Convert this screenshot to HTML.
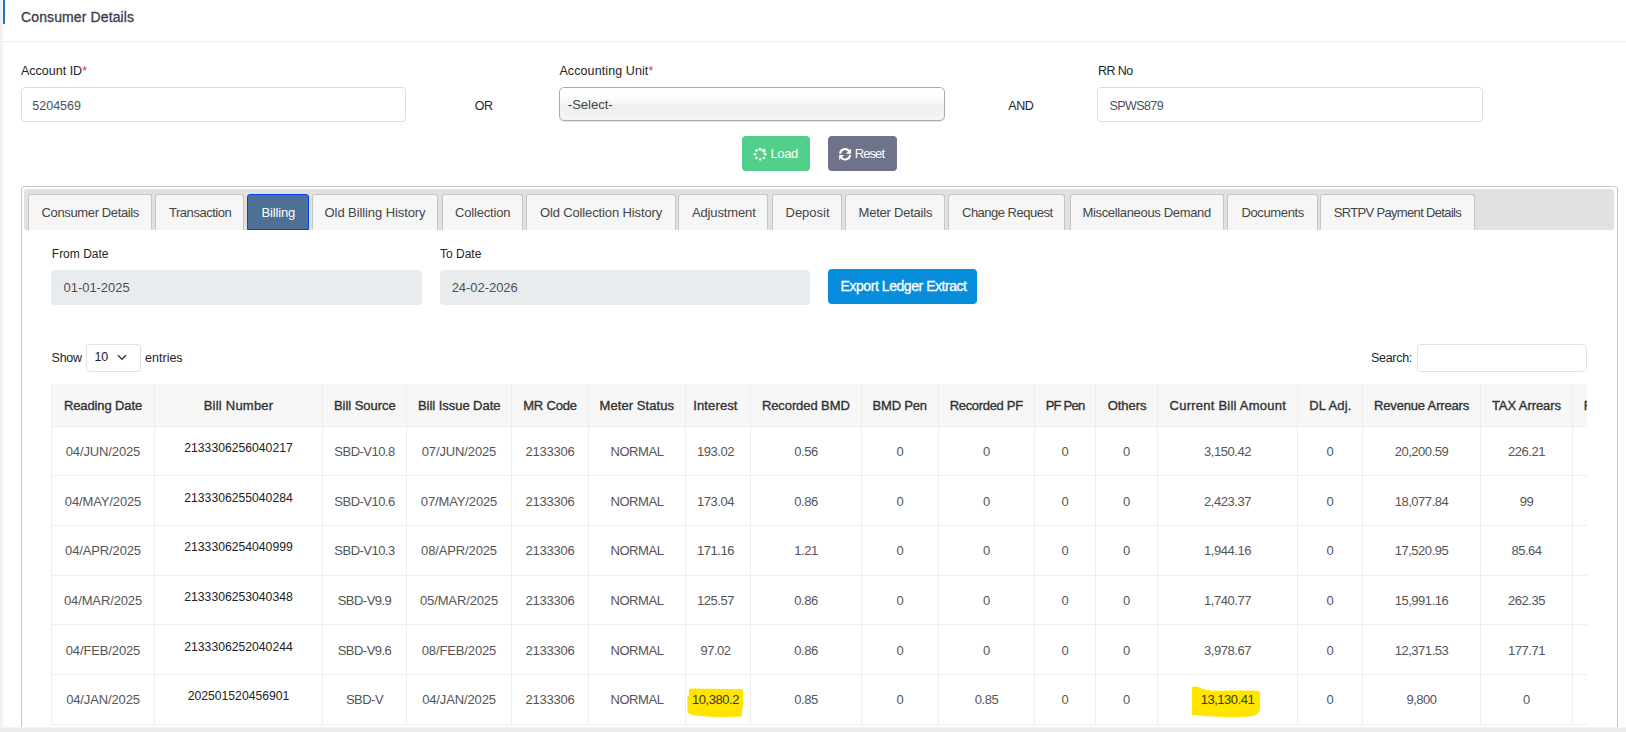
<!DOCTYPE html>
<html><head><meta charset="utf-8"><title>Consumer Details</title>
<style>
html,body{margin:0;padding:0;}
body{width:1626px;height:732px;overflow:hidden;position:relative;background:#fff;font-family:"Liberation Sans", sans-serif;}
body div{position:absolute;}
.t{font-family:"Liberation Sans", sans-serif;}
</style></head><body>
<div style="left:0px;top:0px;width:3px;height:732px;background:#f1f2f5;"></div><div style="left:3px;top:0px;width:2px;height:24px;background:#1c79c0;"></div><div class="t" style="left:21px;top:17.25px;font-size:14px;color:#3b4050;font-weight:normal;line-height:0;white-space:nowrap;letter-spacing:0.12px;-webkit-text-stroke:0.32px #3b4050;">Consumer Details</div><div style="left:3px;top:41px;width:1623px;height:1px;background:#eceef1;"></div><div class="t" style="left:21px;top:71.25px;font-size:12.5px;color:#212529;font-weight:normal;line-height:0;white-space:nowrap;">Account ID<span style="color:#e3342f">*</span></div><div style="left:21px;top:87px;width:385px;height:35px;border:1px solid #dadde2;border-radius:4px;box-sizing:border-box;background:#fff;"></div><div class="t" style="left:32.3px;top:106.25px;font-size:12.5px;color:#495057;font-weight:normal;line-height:0;white-space:nowrap;">5204569</div><div class="t" style="left:474.8px;top:106.25px;font-size:12.5px;color:#212529;font-weight:normal;line-height:0;white-space:nowrap;letter-spacing:-0.5px;">OR</div><div class="t" style="left:559.4px;top:70.95px;font-size:12.5px;color:#212529;font-weight:normal;line-height:0;white-space:nowrap;letter-spacing:0.1px;">Accounting Unit<span style="color:#e3342f">*</span></div><div style="left:559px;top:87px;width:386px;height:34px;border:1px solid #aaa;border-radius:5px;box-sizing:border-box;background:linear-gradient(#fff 20%,#f6f6f6 50%,#eee 52%,#f4f4f4 100%);box-shadow:0 1px 1px rgba(0,0,0,.1);"></div><div class="t" style="left:567.8px;top:104.55px;font-size:13px;color:#444;font-weight:normal;line-height:0;white-space:nowrap;">-Select-</div><div class="t" style="left:1008.3px;top:106.25px;font-size:12.5px;color:#212529;font-weight:normal;line-height:0;white-space:nowrap;letter-spacing:-0.4px;">AND</div><div class="t" style="left:1098px;top:71.25px;font-size:12.5px;color:#212529;font-weight:normal;line-height:0;white-space:nowrap;letter-spacing:-0.6px;">RR No</div><div style="left:1097px;top:87px;width:386px;height:35px;border:1px solid #dadde2;border-radius:4px;box-sizing:border-box;background:#fff;"></div><div class="t" style="left:1109.6px;top:106.25px;font-size:12.5px;color:#495057;font-weight:normal;line-height:0;white-space:nowrap;letter-spacing:-0.6px;">SPWS879</div><div style="left:742px;top:136px;width:68px;height:35px;background:#52d08b;border-radius:4px;"></div><div style="left:828px;top:136px;width:69px;height:35px;background:#6e7389;border-radius:4px;"></div><svg style="position:absolute;left:748px;top:144px" width="24" height="20" viewBox="0 0 24 20"><circle cx="12.0" cy="5.2" r="1.45" fill="#fff"/><circle cx="15.8" cy="6.7" r="1.9" fill="#fff"/><circle cx="17.2" cy="10.2" r="1.3" fill="#fff"/><circle cx="15.8" cy="13.9" r="1.25" fill="#fff"/><circle cx="12.2" cy="15.4" r="1.2" fill="#fff"/><circle cx="8.5" cy="13.9" r="1.25" fill="#fff"/><circle cx="7.0" cy="10.2" r="1.3" fill="#fff"/><circle cx="8.5" cy="6.6" r="1.45" fill="#fff"/></svg><div class="t" style="left:770.5px;top:154.05px;font-size:13px;color:#fff;font-weight:normal;line-height:0;white-space:nowrap;letter-spacing:-0.4px;">Load</div><svg style="position:absolute;left:834px;top:144px" width="24" height="20" viewBox="0 0 24 20"><path d="M6.1 9.8A5 5 0 0 1 15.0 7.0" stroke="#fff" stroke-width="2.1" fill="none"/><path d="M17.1 4.6V9.8H11.9Z" fill="#fff"/><path d="M16.1 10.9A5 5 0 0 1 7.2 13.6" stroke="#fff" stroke-width="2.1" fill="none"/><path d="M5.1 15.9V10.9H10.1Z" fill="#fff"/></svg><div class="t" style="left:854.7px;top:154.05px;font-size:13px;color:#fff;font-weight:normal;line-height:0;white-space:nowrap;letter-spacing:-0.9px;">Reset</div><div style="left:21px;top:186px;width:1597px;height:600px;border:1px solid #c8c8c8;border-radius:3px;box-sizing:border-box;background:#fff;"></div><div style="left:24px;top:189px;width:1590px;height:41px;background:#e3e0e0;border-radius:3px;"></div><div style="left:28px;top:194px;width:124px;height:36px;background:#f6f6f6;border:1px solid #c5c5c5;border-bottom:0;border-radius:3px 3px 0 0;box-sizing:border-box;"></div><div class="t" style="left:41.6px;top:213.05px;font-size:13px;color:#454545;font-weight:normal;line-height:0;white-space:nowrap;letter-spacing:-0.371px;">Consumer Details</div><div style="left:155px;top:194px;width:89px;height:36px;background:#f6f6f6;border:1px solid #c5c5c5;border-bottom:0;border-radius:3px 3px 0 0;box-sizing:border-box;"></div><div class="t" style="left:169px;top:213.05px;font-size:13px;color:#454545;font-weight:normal;line-height:0;white-space:nowrap;letter-spacing:-0.467px;">Transaction</div><div style="left:247px;top:194px;width:62px;height:36px;background:#4d7094;border:1px solid #003eff;border-radius:3px 3px 0 0;box-sizing:border-box;"></div><div class="t" style="left:261.5px;top:213.05px;font-size:13px;color:#fff;font-weight:normal;line-height:0;white-space:nowrap;letter-spacing:-0.155px;">Billing</div><div style="left:312px;top:194px;width:126px;height:36px;background:#f6f6f6;border:1px solid #c5c5c5;border-bottom:0;border-radius:3px 3px 0 0;box-sizing:border-box;"></div><div class="t" style="left:324.6px;top:213.05px;font-size:13px;color:#454545;font-weight:normal;line-height:0;white-space:nowrap;letter-spacing:-0.089px;">Old Billing History</div><div style="left:442px;top:194px;width:81px;height:36px;background:#f6f6f6;border:1px solid #c5c5c5;border-bottom:0;border-radius:3px 3px 0 0;box-sizing:border-box;"></div><div class="t" style="left:455px;top:213.05px;font-size:13px;color:#454545;font-weight:normal;line-height:0;white-space:nowrap;letter-spacing:-0.179px;">Collection</div><div style="left:526px;top:194px;width:150px;height:36px;background:#f6f6f6;border:1px solid #c5c5c5;border-bottom:0;border-radius:3px 3px 0 0;box-sizing:border-box;"></div><div class="t" style="left:539.9px;top:213.05px;font-size:13px;color:#454545;font-weight:normal;line-height:0;white-space:nowrap;letter-spacing:-0.127px;">Old Collection History</div><div style="left:678px;top:194px;width:90px;height:36px;background:#f6f6f6;border:1px solid #c5c5c5;border-bottom:0;border-radius:3px 3px 0 0;box-sizing:border-box;"></div><div class="t" style="left:691.9px;top:213.05px;font-size:13px;color:#454545;font-weight:normal;line-height:0;white-space:nowrap;letter-spacing:-0.125px;">Adjustment</div><div style="left:772px;top:194px;width:70px;height:36px;background:#f6f6f6;border:1px solid #c5c5c5;border-bottom:0;border-radius:3px 3px 0 0;box-sizing:border-box;"></div><div class="t" style="left:785.5px;top:213.05px;font-size:13px;color:#454545;font-weight:normal;line-height:0;white-space:nowrap;letter-spacing:__LS__Depositpx;">Deposit</div><div style="left:845px;top:194px;width:100px;height:36px;background:#f6f6f6;border:1px solid #c5c5c5;border-bottom:0;border-radius:3px 3px 0 0;box-sizing:border-box;"></div><div class="t" style="left:858.6px;top:213.05px;font-size:13px;color:#454545;font-weight:normal;line-height:0;white-space:nowrap;letter-spacing:-0.229px;">Meter Details</div><div style="left:948px;top:194px;width:117px;height:36px;background:#f6f6f6;border:1px solid #c5c5c5;border-bottom:0;border-radius:3px 3px 0 0;box-sizing:border-box;"></div><div class="t" style="left:962px;top:213.05px;font-size:13px;color:#454545;font-weight:normal;line-height:0;white-space:nowrap;letter-spacing:-0.506px;">Change Request</div><div style="left:1070px;top:194px;width:154px;height:36px;background:#f6f6f6;border:1px solid #c5c5c5;border-bottom:0;border-radius:3px 3px 0 0;box-sizing:border-box;"></div><div class="t" style="left:1082.5px;top:213.05px;font-size:13px;color:#454545;font-weight:normal;line-height:0;white-space:nowrap;letter-spacing:-0.341px;">Miscellaneous Demand</div><div style="left:1227px;top:194px;width:91px;height:36px;background:#f6f6f6;border:1px solid #c5c5c5;border-bottom:0;border-radius:3px 3px 0 0;box-sizing:border-box;"></div><div class="t" style="left:1241.4px;top:213.05px;font-size:13px;color:#454545;font-weight:normal;line-height:0;white-space:nowrap;letter-spacing:-0.361px;">Documents</div><div style="left:1320px;top:194px;width:155px;height:36px;background:#f6f6f6;border:1px solid #c5c5c5;border-bottom:0;border-radius:3px 3px 0 0;box-sizing:border-box;"></div><div class="t" style="left:1333.7px;top:213.05px;font-size:13px;color:#454545;font-weight:normal;line-height:0;white-space:nowrap;letter-spacing:-0.661px;">SRTPV Payment Details</div><div class="t" style="left:51.8px;top:254.25px;font-size:12px;color:#212529;font-weight:normal;line-height:0;white-space:nowrap;">From Date</div><div style="left:51px;top:270px;width:371px;height:35px;background:#e9ecef;border-radius:4px;"></div><div class="t" style="left:63.6px;top:287.55px;font-size:13px;color:#495057;font-weight:normal;line-height:0;white-space:nowrap;letter-spacing:-0.05px;">01-01-2025</div><div class="t" style="left:440px;top:254.25px;font-size:12px;color:#212529;font-weight:normal;line-height:0;white-space:nowrap;">To Date</div><div style="left:440px;top:270px;width:370px;height:35px;background:#e9ecef;border-radius:4px;"></div><div class="t" style="left:451.7px;top:287.55px;font-size:13px;color:#495057;font-weight:normal;line-height:0;white-space:nowrap;letter-spacing:-0.05px;">24-02-2026</div><div style="left:828px;top:269px;width:149px;height:35px;background:#078ddc;border-radius:4px;"></div><div class="t" style="left:840.6px;top:286.25px;font-size:14px;color:#fff;font-weight:normal;line-height:0;white-space:nowrap;letter-spacing:-0.45px;-webkit-text-stroke:0.3px #fff;">Export Ledger Extract</div><div class="t" style="left:51.6px;top:358.25px;font-size:12.5px;color:#212529;font-weight:normal;line-height:0;white-space:nowrap;letter-spacing:-0.3px;">Show</div><div style="left:85.5px;top:344px;width:55px;height:27.5px;border:1px solid #dee2e6;border-radius:3px;box-sizing:border-box;background:#fff;"></div><div class="t" style="left:94.4px;top:357.05px;font-size:12.5px;color:#212529;font-weight:normal;line-height:0;white-space:nowrap;">10</div><svg style="position:absolute;left:117px;top:354px" width="10" height="7" viewBox="0 0 10 7"><path d="M1 1.2L5 5.2L9 1.2" stroke="#343a40" stroke-width="1.5" fill="none"/></svg><div class="t" style="left:145.1px;top:358.25px;font-size:12.5px;color:#212529;font-weight:normal;line-height:0;white-space:nowrap;">entries</div><div class="t" style="left:1371px;top:358.25px;font-size:12.5px;color:#212529;font-weight:normal;line-height:0;white-space:nowrap;letter-spacing:-0.3px;">Search:</div><div style="left:1417px;top:344px;width:170px;height:28px;border:1px solid #dee2e6;border-radius:4px;box-sizing:border-box;background:#fff;"></div><div style="left:51px;top:384px;width:1536px;height:360px;overflow:hidden;"><div style="left:0px;top:0px;width:1700px;height:42px;background:#f7f7f7;"></div><div style="left:0px;top:42px;width:1700px;height:1px;background:#eceef0;"></div><div style="left:0px;top:91px;width:1700px;height:1px;background:#eceef0;"></div><div style="left:0px;top:141px;width:1700px;height:1px;background:#eceef0;"></div><div style="left:0px;top:191px;width:1700px;height:1px;background:#eceef0;"></div><div style="left:0px;top:240px;width:1700px;height:1px;background:#eceef0;"></div><div style="left:0px;top:290px;width:1700px;height:1px;background:#eceef0;"></div><div style="left:0px;top:340px;width:1700px;height:1px;background:#eceef0;"></div><div style="left:0px;top:0px;width:1px;height:340px;background:#eceef0;"></div><div style="left:103px;top:0px;width:1px;height:340px;background:#eceef0;"></div><div style="left:271px;top:0px;width:1px;height:340px;background:#eceef0;"></div><div style="left:355px;top:0px;width:1px;height:340px;background:#eceef0;"></div><div style="left:460px;top:0px;width:1px;height:340px;background:#eceef0;"></div><div style="left:537px;top:0px;width:1px;height:340px;background:#eceef0;"></div><div style="left:634px;top:0px;width:1px;height:340px;background:#eceef0;"></div><div style="left:699px;top:0px;width:1px;height:340px;background:#eceef0;"></div><div style="left:810px;top:0px;width:1px;height:340px;background:#eceef0;"></div><div style="left:887px;top:0px;width:1px;height:340px;background:#eceef0;"></div><div style="left:983px;top:0px;width:1px;height:340px;background:#eceef0;"></div><div style="left:1044px;top:0px;width:1px;height:340px;background:#eceef0;"></div><div style="left:1106px;top:0px;width:1px;height:340px;background:#eceef0;"></div><div style="left:1246px;top:0px;width:1px;height:340px;background:#eceef0;"></div><div style="left:1311px;top:0px;width:1px;height:340px;background:#eceef0;"></div><div style="left:1429px;top:0px;width:1px;height:340px;background:#eceef0;"></div><div style="left:1521px;top:0px;width:1px;height:340px;background:#eceef0;"></div><div style="left:1629px;top:0px;width:1px;height:340px;background:#eceef0;"></div><svg style="left:636px;top:304px;position:absolute" width="57" height="30" viewBox="0 0 57 30"><path d="M2 1.5 L3.5 0.6 L56 1.2 L56 20.5 L55 21 L55 28.5 L33 29.2 L20 28.5 L6 27.5 L0.5 24.5 L0.3 8 L2 7.5 Z" fill="#ffe500"/></svg><svg style="left:1141px;top:302px;position:absolute" width="69" height="32" viewBox="0 0 69 32"><path d="M0 1 L5 0.6 L9 2.2 Q14 4.2 22 4.8 L62 4.6 Q67.5 4.6 68 7.5 L68 24 Q66 29.5 58 30.5 L40 31.2 L20 30.4 L0 29 Z" fill="#ffe500"/></svg><div class="t" style="left:13px;top:22.05px;font-size:13px;color:#333;font-weight:normal;line-height:0;white-space:nowrap;letter-spacing:-0.125px;-webkit-text-stroke:0.35px #333;">Reading Date</div><div class="t" style="left:152.7px;top:22.05px;font-size:13px;color:#333;font-weight:normal;line-height:0;white-space:nowrap;letter-spacing:0.228px;-webkit-text-stroke:0.35px #333;">Bill Number</div><div class="t" style="left:283px;top:22.05px;font-size:13px;color:#333;font-weight:normal;line-height:0;white-space:nowrap;letter-spacing:-0.049px;-webkit-text-stroke:0.35px #333;">Bill Source</div><div class="t" style="left:367px;top:22.05px;font-size:13px;color:#333;font-weight:normal;line-height:0;white-space:nowrap;letter-spacing:-0.046px;-webkit-text-stroke:0.35px #333;">Bill Issue Date</div><div class="t" style="left:472.20000000000005px;top:22.05px;font-size:13px;color:#333;font-weight:normal;line-height:0;white-space:nowrap;letter-spacing:-0.189px;-webkit-text-stroke:0.35px #333;">MR Code</div><div class="t" style="left:548.6px;top:22.05px;font-size:13px;color:#333;font-weight:normal;line-height:0;white-space:nowrap;letter-spacing:0.066px;-webkit-text-stroke:0.35px #333;">Meter Status</div><div class="t" style="left:642.3px;top:22.05px;font-size:13px;color:#333;font-weight:normal;line-height:0;white-space:nowrap;letter-spacing:0.118px;-webkit-text-stroke:0.35px #333;">Interest</div><div class="t" style="left:710.9px;top:22.05px;font-size:13px;color:#333;font-weight:normal;line-height:0;white-space:nowrap;letter-spacing:-0.090px;-webkit-text-stroke:0.35px #333;">Recorded BMD</div><div class="t" style="left:821.6px;top:22.05px;font-size:13px;color:#333;font-weight:normal;line-height:0;white-space:nowrap;letter-spacing:-0.192px;-webkit-text-stroke:0.35px #333;">BMD Pen</div><div class="t" style="left:898.7px;top:22.05px;font-size:13px;color:#333;font-weight:normal;line-height:0;white-space:nowrap;letter-spacing:-0.318px;-webkit-text-stroke:0.35px #333;">Recorded PF</div><div class="t" style="left:994.7px;top:22.05px;font-size:13px;color:#333;font-weight:normal;line-height:0;white-space:nowrap;letter-spacing:-0.777px;-webkit-text-stroke:0.35px #333;">PF Pen</div><div class="t" style="left:1056.7px;top:22.05px;font-size:13px;color:#333;font-weight:normal;line-height:0;white-space:nowrap;letter-spacing:-0.053px;-webkit-text-stroke:0.35px #333;">Others</div><div class="t" style="left:1118.6px;top:22.05px;font-size:13px;color:#333;font-weight:normal;line-height:0;white-space:nowrap;letter-spacing:0.237px;-webkit-text-stroke:0.35px #333;">Current Bill Amount</div><div class="t" style="left:1258.2px;top:22.05px;font-size:13px;color:#333;font-weight:normal;line-height:0;white-space:nowrap;letter-spacing:0.109px;-webkit-text-stroke:0.35px #333;">DL Adj.</div><div class="t" style="left:1323px;top:22.05px;font-size:13px;color:#333;font-weight:normal;line-height:0;white-space:nowrap;letter-spacing:-0.164px;-webkit-text-stroke:0.35px #333;">Revenue Arrears</div><div class="t" style="left:1440.9px;top:22.05px;font-size:13px;color:#333;font-weight:normal;line-height:0;white-space:nowrap;letter-spacing:-0.068px;-webkit-text-stroke:0.35px #333;">TAX Arrears</div><div class="t" style="left:1532.8px;top:22.05px;font-size:13px;color:#333;font-weight:normal;line-height:0;white-space:nowrap;letter-spacing:-0.4px;-webkit-text-stroke:0.35px #333;">Record</div><div class="t" style="left:0px;top:67.75px;font-size:13px;color:#555;font-weight:normal;line-height:0;white-space:nowrap;letter-spacing:-0.13px;width:103px;text-align:center;box-sizing:border-box;padding-left:1px;">04/JUN/2025</div><div class="t" style="left:103px;top:64.05px;font-size:12.2px;color:#212121;font-weight:normal;line-height:0;white-space:nowrap;width:168px;text-align:center;padding-left:1px;box-sizing:border-box;">2133306256040217</div><div class="t" style="left:271px;top:67.75px;font-size:13px;color:#555;font-weight:normal;line-height:0;white-space:nowrap;letter-spacing:-0.53px;width:84px;text-align:center;box-sizing:border-box;padding-left:1px;">SBD-V10.8</div><div class="t" style="left:355px;top:67.75px;font-size:13px;color:#555;font-weight:normal;line-height:0;white-space:nowrap;letter-spacing:-0.13px;width:105px;text-align:center;box-sizing:border-box;padding-left:1px;">07/JUN/2025</div><div class="t" style="left:460px;top:67.75px;font-size:13px;color:#555;font-weight:normal;line-height:0;white-space:nowrap;letter-spacing:-0.21px;width:77px;text-align:center;box-sizing:border-box;padding-left:1px;">2133306</div><div class="t" style="left:537px;top:67.75px;font-size:13px;color:#555;font-weight:normal;line-height:0;white-space:nowrap;letter-spacing:-0.42px;width:97px;text-align:center;box-sizing:border-box;padding-left:1px;">NORMAL</div><div class="t" style="left:631.5px;top:67.75px;font-size:13px;color:#555;font-weight:normal;line-height:0;white-space:nowrap;letter-spacing:-0.47px;width:65px;text-align:center;box-sizing:border-box;padding-left:1px;">193.02</div><div class="t" style="left:699px;top:67.75px;font-size:13px;color:#555;font-weight:normal;line-height:0;white-space:nowrap;letter-spacing:-0.47px;width:111px;text-align:center;box-sizing:border-box;padding-left:1px;">0.56</div><div class="t" style="left:810px;top:67.75px;font-size:13px;color:#555;font-weight:normal;line-height:0;white-space:nowrap;letter-spacing:-0.47px;width:77px;text-align:center;box-sizing:border-box;padding-left:1px;">0</div><div class="t" style="left:887px;top:67.75px;font-size:13px;color:#555;font-weight:normal;line-height:0;white-space:nowrap;letter-spacing:-0.47px;width:96px;text-align:center;box-sizing:border-box;padding-left:1px;">0</div><div class="t" style="left:983px;top:67.75px;font-size:13px;color:#555;font-weight:normal;line-height:0;white-space:nowrap;letter-spacing:-0.47px;width:61px;text-align:center;box-sizing:border-box;padding-left:1px;">0</div><div class="t" style="left:1044px;top:67.75px;font-size:13px;color:#555;font-weight:normal;line-height:0;white-space:nowrap;letter-spacing:-0.47px;width:62px;text-align:center;box-sizing:border-box;padding-left:1px;">0</div><div class="t" style="left:1106px;top:67.75px;font-size:13px;color:#555;font-weight:normal;line-height:0;white-space:nowrap;letter-spacing:-0.47px;width:140px;text-align:center;box-sizing:border-box;padding-left:1px;">3,150.42</div><div class="t" style="left:1246px;top:67.75px;font-size:13px;color:#555;font-weight:normal;line-height:0;white-space:nowrap;letter-spacing:-0.47px;width:65px;text-align:center;box-sizing:border-box;padding-left:1px;">0</div><div class="t" style="left:1311px;top:67.75px;font-size:13px;color:#555;font-weight:normal;line-height:0;white-space:nowrap;letter-spacing:-0.47px;width:118px;text-align:center;box-sizing:border-box;padding-left:1px;">20,200.59</div><div class="t" style="left:1429px;top:67.75px;font-size:13px;color:#555;font-weight:normal;line-height:0;white-space:nowrap;letter-spacing:-0.47px;width:92px;text-align:center;box-sizing:border-box;padding-left:1px;">226.21</div><div class="t" style="left:0px;top:117.75px;font-size:13px;color:#555;font-weight:normal;line-height:0;white-space:nowrap;letter-spacing:-0.13px;width:103px;text-align:center;box-sizing:border-box;padding-left:1px;">04/MAY/2025</div><div class="t" style="left:103px;top:114.05px;font-size:12.2px;color:#212121;font-weight:normal;line-height:0;white-space:nowrap;width:168px;text-align:center;padding-left:1px;box-sizing:border-box;">2133306255040284</div><div class="t" style="left:271px;top:117.75px;font-size:13px;color:#555;font-weight:normal;line-height:0;white-space:nowrap;letter-spacing:-0.53px;width:84px;text-align:center;box-sizing:border-box;padding-left:1px;">SBD-V10.6</div><div class="t" style="left:355px;top:117.75px;font-size:13px;color:#555;font-weight:normal;line-height:0;white-space:nowrap;letter-spacing:-0.13px;width:105px;text-align:center;box-sizing:border-box;padding-left:1px;">07/MAY/2025</div><div class="t" style="left:460px;top:117.75px;font-size:13px;color:#555;font-weight:normal;line-height:0;white-space:nowrap;letter-spacing:-0.21px;width:77px;text-align:center;box-sizing:border-box;padding-left:1px;">2133306</div><div class="t" style="left:537px;top:117.75px;font-size:13px;color:#555;font-weight:normal;line-height:0;white-space:nowrap;letter-spacing:-0.42px;width:97px;text-align:center;box-sizing:border-box;padding-left:1px;">NORMAL</div><div class="t" style="left:631.5px;top:117.75px;font-size:13px;color:#555;font-weight:normal;line-height:0;white-space:nowrap;letter-spacing:-0.47px;width:65px;text-align:center;box-sizing:border-box;padding-left:1px;">173.04</div><div class="t" style="left:699px;top:117.75px;font-size:13px;color:#555;font-weight:normal;line-height:0;white-space:nowrap;letter-spacing:-0.47px;width:111px;text-align:center;box-sizing:border-box;padding-left:1px;">0.86</div><div class="t" style="left:810px;top:117.75px;font-size:13px;color:#555;font-weight:normal;line-height:0;white-space:nowrap;letter-spacing:-0.47px;width:77px;text-align:center;box-sizing:border-box;padding-left:1px;">0</div><div class="t" style="left:887px;top:117.75px;font-size:13px;color:#555;font-weight:normal;line-height:0;white-space:nowrap;letter-spacing:-0.47px;width:96px;text-align:center;box-sizing:border-box;padding-left:1px;">0</div><div class="t" style="left:983px;top:117.75px;font-size:13px;color:#555;font-weight:normal;line-height:0;white-space:nowrap;letter-spacing:-0.47px;width:61px;text-align:center;box-sizing:border-box;padding-left:1px;">0</div><div class="t" style="left:1044px;top:117.75px;font-size:13px;color:#555;font-weight:normal;line-height:0;white-space:nowrap;letter-spacing:-0.47px;width:62px;text-align:center;box-sizing:border-box;padding-left:1px;">0</div><div class="t" style="left:1106px;top:117.75px;font-size:13px;color:#555;font-weight:normal;line-height:0;white-space:nowrap;letter-spacing:-0.47px;width:140px;text-align:center;box-sizing:border-box;padding-left:1px;">2,423.37</div><div class="t" style="left:1246px;top:117.75px;font-size:13px;color:#555;font-weight:normal;line-height:0;white-space:nowrap;letter-spacing:-0.47px;width:65px;text-align:center;box-sizing:border-box;padding-left:1px;">0</div><div class="t" style="left:1311px;top:117.75px;font-size:13px;color:#555;font-weight:normal;line-height:0;white-space:nowrap;letter-spacing:-0.47px;width:118px;text-align:center;box-sizing:border-box;padding-left:1px;">18,077.84</div><div class="t" style="left:1429px;top:117.75px;font-size:13px;color:#555;font-weight:normal;line-height:0;white-space:nowrap;letter-spacing:-0.47px;width:92px;text-align:center;box-sizing:border-box;padding-left:1px;">99</div><div class="t" style="left:0px;top:166.75px;font-size:13px;color:#555;font-weight:normal;line-height:0;white-space:nowrap;letter-spacing:-0.13px;width:103px;text-align:center;box-sizing:border-box;padding-left:1px;">04/APR/2025</div><div class="t" style="left:103px;top:163.05px;font-size:12.2px;color:#212121;font-weight:normal;line-height:0;white-space:nowrap;width:168px;text-align:center;padding-left:1px;box-sizing:border-box;">2133306254040999</div><div class="t" style="left:271px;top:166.75px;font-size:13px;color:#555;font-weight:normal;line-height:0;white-space:nowrap;letter-spacing:-0.53px;width:84px;text-align:center;box-sizing:border-box;padding-left:1px;">SBD-V10.3</div><div class="t" style="left:355px;top:166.75px;font-size:13px;color:#555;font-weight:normal;line-height:0;white-space:nowrap;letter-spacing:-0.13px;width:105px;text-align:center;box-sizing:border-box;padding-left:1px;">08/APR/2025</div><div class="t" style="left:460px;top:166.75px;font-size:13px;color:#555;font-weight:normal;line-height:0;white-space:nowrap;letter-spacing:-0.21px;width:77px;text-align:center;box-sizing:border-box;padding-left:1px;">2133306</div><div class="t" style="left:537px;top:166.75px;font-size:13px;color:#555;font-weight:normal;line-height:0;white-space:nowrap;letter-spacing:-0.42px;width:97px;text-align:center;box-sizing:border-box;padding-left:1px;">NORMAL</div><div class="t" style="left:631.5px;top:166.75px;font-size:13px;color:#555;font-weight:normal;line-height:0;white-space:nowrap;letter-spacing:-0.47px;width:65px;text-align:center;box-sizing:border-box;padding-left:1px;">171.16</div><div class="t" style="left:699px;top:166.75px;font-size:13px;color:#555;font-weight:normal;line-height:0;white-space:nowrap;letter-spacing:-0.47px;width:111px;text-align:center;box-sizing:border-box;padding-left:1px;">1.21</div><div class="t" style="left:810px;top:166.75px;font-size:13px;color:#555;font-weight:normal;line-height:0;white-space:nowrap;letter-spacing:-0.47px;width:77px;text-align:center;box-sizing:border-box;padding-left:1px;">0</div><div class="t" style="left:887px;top:166.75px;font-size:13px;color:#555;font-weight:normal;line-height:0;white-space:nowrap;letter-spacing:-0.47px;width:96px;text-align:center;box-sizing:border-box;padding-left:1px;">0</div><div class="t" style="left:983px;top:166.75px;font-size:13px;color:#555;font-weight:normal;line-height:0;white-space:nowrap;letter-spacing:-0.47px;width:61px;text-align:center;box-sizing:border-box;padding-left:1px;">0</div><div class="t" style="left:1044px;top:166.75px;font-size:13px;color:#555;font-weight:normal;line-height:0;white-space:nowrap;letter-spacing:-0.47px;width:62px;text-align:center;box-sizing:border-box;padding-left:1px;">0</div><div class="t" style="left:1106px;top:166.75px;font-size:13px;color:#555;font-weight:normal;line-height:0;white-space:nowrap;letter-spacing:-0.47px;width:140px;text-align:center;box-sizing:border-box;padding-left:1px;">1,944.16</div><div class="t" style="left:1246px;top:166.75px;font-size:13px;color:#555;font-weight:normal;line-height:0;white-space:nowrap;letter-spacing:-0.47px;width:65px;text-align:center;box-sizing:border-box;padding-left:1px;">0</div><div class="t" style="left:1311px;top:166.75px;font-size:13px;color:#555;font-weight:normal;line-height:0;white-space:nowrap;letter-spacing:-0.47px;width:118px;text-align:center;box-sizing:border-box;padding-left:1px;">17,520.95</div><div class="t" style="left:1429px;top:166.75px;font-size:13px;color:#555;font-weight:normal;line-height:0;white-space:nowrap;letter-spacing:-0.47px;width:92px;text-align:center;box-sizing:border-box;padding-left:1px;">85.64</div><div class="t" style="left:0px;top:216.75px;font-size:13px;color:#555;font-weight:normal;line-height:0;white-space:nowrap;letter-spacing:-0.13px;width:103px;text-align:center;box-sizing:border-box;padding-left:1px;">04/MAR/2025</div><div class="t" style="left:103px;top:213.05px;font-size:12.2px;color:#212121;font-weight:normal;line-height:0;white-space:nowrap;width:168px;text-align:center;padding-left:1px;box-sizing:border-box;">2133306253040348</div><div class="t" style="left:271px;top:216.75px;font-size:13px;color:#555;font-weight:normal;line-height:0;white-space:nowrap;letter-spacing:-0.53px;width:84px;text-align:center;box-sizing:border-box;padding-left:1px;">SBD-V9.9</div><div class="t" style="left:355px;top:216.75px;font-size:13px;color:#555;font-weight:normal;line-height:0;white-space:nowrap;letter-spacing:-0.13px;width:105px;text-align:center;box-sizing:border-box;padding-left:1px;">05/MAR/2025</div><div class="t" style="left:460px;top:216.75px;font-size:13px;color:#555;font-weight:normal;line-height:0;white-space:nowrap;letter-spacing:-0.21px;width:77px;text-align:center;box-sizing:border-box;padding-left:1px;">2133306</div><div class="t" style="left:537px;top:216.75px;font-size:13px;color:#555;font-weight:normal;line-height:0;white-space:nowrap;letter-spacing:-0.42px;width:97px;text-align:center;box-sizing:border-box;padding-left:1px;">NORMAL</div><div class="t" style="left:631.5px;top:216.75px;font-size:13px;color:#555;font-weight:normal;line-height:0;white-space:nowrap;letter-spacing:-0.47px;width:65px;text-align:center;box-sizing:border-box;padding-left:1px;">125.57</div><div class="t" style="left:699px;top:216.75px;font-size:13px;color:#555;font-weight:normal;line-height:0;white-space:nowrap;letter-spacing:-0.47px;width:111px;text-align:center;box-sizing:border-box;padding-left:1px;">0.86</div><div class="t" style="left:810px;top:216.75px;font-size:13px;color:#555;font-weight:normal;line-height:0;white-space:nowrap;letter-spacing:-0.47px;width:77px;text-align:center;box-sizing:border-box;padding-left:1px;">0</div><div class="t" style="left:887px;top:216.75px;font-size:13px;color:#555;font-weight:normal;line-height:0;white-space:nowrap;letter-spacing:-0.47px;width:96px;text-align:center;box-sizing:border-box;padding-left:1px;">0</div><div class="t" style="left:983px;top:216.75px;font-size:13px;color:#555;font-weight:normal;line-height:0;white-space:nowrap;letter-spacing:-0.47px;width:61px;text-align:center;box-sizing:border-box;padding-left:1px;">0</div><div class="t" style="left:1044px;top:216.75px;font-size:13px;color:#555;font-weight:normal;line-height:0;white-space:nowrap;letter-spacing:-0.47px;width:62px;text-align:center;box-sizing:border-box;padding-left:1px;">0</div><div class="t" style="left:1106px;top:216.75px;font-size:13px;color:#555;font-weight:normal;line-height:0;white-space:nowrap;letter-spacing:-0.47px;width:140px;text-align:center;box-sizing:border-box;padding-left:1px;">1,740.77</div><div class="t" style="left:1246px;top:216.75px;font-size:13px;color:#555;font-weight:normal;line-height:0;white-space:nowrap;letter-spacing:-0.47px;width:65px;text-align:center;box-sizing:border-box;padding-left:1px;">0</div><div class="t" style="left:1311px;top:216.75px;font-size:13px;color:#555;font-weight:normal;line-height:0;white-space:nowrap;letter-spacing:-0.47px;width:118px;text-align:center;box-sizing:border-box;padding-left:1px;">15,991.16</div><div class="t" style="left:1429px;top:216.75px;font-size:13px;color:#555;font-weight:normal;line-height:0;white-space:nowrap;letter-spacing:-0.47px;width:92px;text-align:center;box-sizing:border-box;padding-left:1px;">262.35</div><div class="t" style="left:0px;top:266.75px;font-size:13px;color:#555;font-weight:normal;line-height:0;white-space:nowrap;letter-spacing:-0.13px;width:103px;text-align:center;box-sizing:border-box;padding-left:1px;">04/FEB/2025</div><div class="t" style="left:103px;top:263.05px;font-size:12.2px;color:#212121;font-weight:normal;line-height:0;white-space:nowrap;width:168px;text-align:center;padding-left:1px;box-sizing:border-box;">2133306252040244</div><div class="t" style="left:271px;top:266.75px;font-size:13px;color:#555;font-weight:normal;line-height:0;white-space:nowrap;letter-spacing:-0.53px;width:84px;text-align:center;box-sizing:border-box;padding-left:1px;">SBD-V9.6</div><div class="t" style="left:355px;top:266.75px;font-size:13px;color:#555;font-weight:normal;line-height:0;white-space:nowrap;letter-spacing:-0.13px;width:105px;text-align:center;box-sizing:border-box;padding-left:1px;">08/FEB/2025</div><div class="t" style="left:460px;top:266.75px;font-size:13px;color:#555;font-weight:normal;line-height:0;white-space:nowrap;letter-spacing:-0.21px;width:77px;text-align:center;box-sizing:border-box;padding-left:1px;">2133306</div><div class="t" style="left:537px;top:266.75px;font-size:13px;color:#555;font-weight:normal;line-height:0;white-space:nowrap;letter-spacing:-0.42px;width:97px;text-align:center;box-sizing:border-box;padding-left:1px;">NORMAL</div><div class="t" style="left:631.5px;top:266.75px;font-size:13px;color:#555;font-weight:normal;line-height:0;white-space:nowrap;letter-spacing:-0.47px;width:65px;text-align:center;box-sizing:border-box;padding-left:1px;">97.02</div><div class="t" style="left:699px;top:266.75px;font-size:13px;color:#555;font-weight:normal;line-height:0;white-space:nowrap;letter-spacing:-0.47px;width:111px;text-align:center;box-sizing:border-box;padding-left:1px;">0.86</div><div class="t" style="left:810px;top:266.75px;font-size:13px;color:#555;font-weight:normal;line-height:0;white-space:nowrap;letter-spacing:-0.47px;width:77px;text-align:center;box-sizing:border-box;padding-left:1px;">0</div><div class="t" style="left:887px;top:266.75px;font-size:13px;color:#555;font-weight:normal;line-height:0;white-space:nowrap;letter-spacing:-0.47px;width:96px;text-align:center;box-sizing:border-box;padding-left:1px;">0</div><div class="t" style="left:983px;top:266.75px;font-size:13px;color:#555;font-weight:normal;line-height:0;white-space:nowrap;letter-spacing:-0.47px;width:61px;text-align:center;box-sizing:border-box;padding-left:1px;">0</div><div class="t" style="left:1044px;top:266.75px;font-size:13px;color:#555;font-weight:normal;line-height:0;white-space:nowrap;letter-spacing:-0.47px;width:62px;text-align:center;box-sizing:border-box;padding-left:1px;">0</div><div class="t" style="left:1106px;top:266.75px;font-size:13px;color:#555;font-weight:normal;line-height:0;white-space:nowrap;letter-spacing:-0.47px;width:140px;text-align:center;box-sizing:border-box;padding-left:1px;">3,978.67</div><div class="t" style="left:1246px;top:266.75px;font-size:13px;color:#555;font-weight:normal;line-height:0;white-space:nowrap;letter-spacing:-0.47px;width:65px;text-align:center;box-sizing:border-box;padding-left:1px;">0</div><div class="t" style="left:1311px;top:266.75px;font-size:13px;color:#555;font-weight:normal;line-height:0;white-space:nowrap;letter-spacing:-0.47px;width:118px;text-align:center;box-sizing:border-box;padding-left:1px;">12,371.53</div><div class="t" style="left:1429px;top:266.75px;font-size:13px;color:#555;font-weight:normal;line-height:0;white-space:nowrap;letter-spacing:-0.47px;width:92px;text-align:center;box-sizing:border-box;padding-left:1px;">177.71</div><div class="t" style="left:0px;top:315.75px;font-size:13px;color:#555;font-weight:normal;line-height:0;white-space:nowrap;letter-spacing:-0.13px;width:103px;text-align:center;box-sizing:border-box;padding-left:1px;">04/JAN/2025</div><div class="t" style="left:103px;top:312.05px;font-size:12.2px;color:#212121;font-weight:normal;line-height:0;white-space:nowrap;width:168px;text-align:center;padding-left:1px;box-sizing:border-box;">202501520456901</div><div class="t" style="left:271px;top:315.75px;font-size:13px;color:#555;font-weight:normal;line-height:0;white-space:nowrap;letter-spacing:-0.53px;width:84px;text-align:center;box-sizing:border-box;padding-left:1px;">SBD-V</div><div class="t" style="left:355px;top:315.75px;font-size:13px;color:#555;font-weight:normal;line-height:0;white-space:nowrap;letter-spacing:-0.13px;width:105px;text-align:center;box-sizing:border-box;padding-left:1px;">04/JAN/2025</div><div class="t" style="left:460px;top:315.75px;font-size:13px;color:#555;font-weight:normal;line-height:0;white-space:nowrap;letter-spacing:-0.21px;width:77px;text-align:center;box-sizing:border-box;padding-left:1px;">2133306</div><div class="t" style="left:537px;top:315.75px;font-size:13px;color:#555;font-weight:normal;line-height:0;white-space:nowrap;letter-spacing:-0.42px;width:97px;text-align:center;box-sizing:border-box;padding-left:1px;">NORMAL</div><div class="t" style="left:631.5px;top:315.75px;font-size:13px;color:#3b3a14;font-weight:normal;line-height:0;white-space:nowrap;letter-spacing:-0.47px;width:65px;text-align:center;box-sizing:border-box;padding-left:1px;">10,380.2</div><div class="t" style="left:699px;top:315.75px;font-size:13px;color:#555;font-weight:normal;line-height:0;white-space:nowrap;letter-spacing:-0.47px;width:111px;text-align:center;box-sizing:border-box;padding-left:1px;">0.85</div><div class="t" style="left:810px;top:315.75px;font-size:13px;color:#555;font-weight:normal;line-height:0;white-space:nowrap;letter-spacing:-0.47px;width:77px;text-align:center;box-sizing:border-box;padding-left:1px;">0</div><div class="t" style="left:887px;top:315.75px;font-size:13px;color:#555;font-weight:normal;line-height:0;white-space:nowrap;letter-spacing:-0.47px;width:96px;text-align:center;box-sizing:border-box;padding-left:1px;">0.85</div><div class="t" style="left:983px;top:315.75px;font-size:13px;color:#555;font-weight:normal;line-height:0;white-space:nowrap;letter-spacing:-0.47px;width:61px;text-align:center;box-sizing:border-box;padding-left:1px;">0</div><div class="t" style="left:1044px;top:315.75px;font-size:13px;color:#555;font-weight:normal;line-height:0;white-space:nowrap;letter-spacing:-0.47px;width:62px;text-align:center;box-sizing:border-box;padding-left:1px;">0</div><div class="t" style="left:1106px;top:315.75px;font-size:13px;color:#3b3a14;font-weight:normal;line-height:0;white-space:nowrap;letter-spacing:-0.47px;width:140px;text-align:center;box-sizing:border-box;padding-left:1px;">13,130.41</div><div class="t" style="left:1246px;top:315.75px;font-size:13px;color:#555;font-weight:normal;line-height:0;white-space:nowrap;letter-spacing:-0.47px;width:65px;text-align:center;box-sizing:border-box;padding-left:1px;">0</div><div class="t" style="left:1311px;top:315.75px;font-size:13px;color:#555;font-weight:normal;line-height:0;white-space:nowrap;letter-spacing:-0.47px;width:118px;text-align:center;box-sizing:border-box;padding-left:1px;">9,800</div><div class="t" style="left:1429px;top:315.75px;font-size:13px;color:#555;font-weight:normal;line-height:0;white-space:nowrap;letter-spacing:-0.47px;width:92px;text-align:center;box-sizing:border-box;padding-left:1px;">0</div></div><div style="left:0px;top:727px;width:1626px;height:5px;background:linear-gradient(#f6f6f6,#ebebeb 45%,#ebebeb);"></div>
</body></html>
